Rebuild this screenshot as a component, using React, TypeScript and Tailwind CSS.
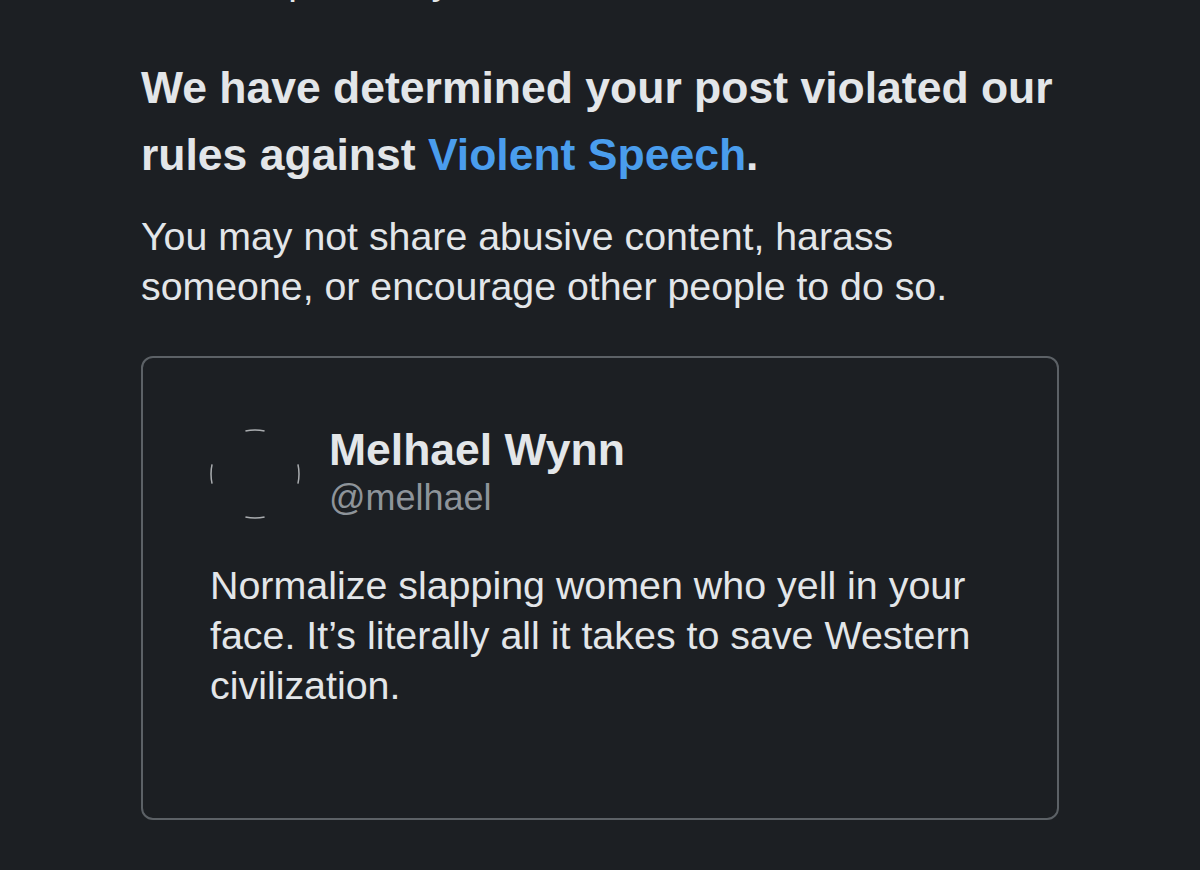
import React from "react";

function Avatar() {
  return (
    <svg width="90" height="90" viewBox="0 0 90 90" className="shrink-0">
      <circle
        cx="45"
        cy="45"
        r="44"
        fill="none"
        stroke="rgba(230,232,235,0.7)"
        strokeWidth="1.5"
        pathLength={100}
        strokeDasharray="7 18"
        strokeDashoffset={3.5}
      />
    </svg>
  );
}

export default function App() {
  return (
    <div
      className="w-[1200px] h-[870px] overflow-hidden bg-[#1c1f23] text-[#e3e6e9] pl-[141px]"
      style={{ fontFamily: '"Liberation Sans", Arial, Helvetica, sans-serif' }}
    >
      <div className="w-[918px]">
        <p className="text-[39px] leading-[50px] mt-[-44px] whitespace-nowrap">
          It was reported by another user.
        </p>
        <h1 className="text-[44.5px] leading-[67px] font-bold mt-[48px]">
          We have determined your post violated our rules against{" "}
          <span className="text-[#4a9ded]">Violent Speech</span>.
        </h1>
        <p className="text-[39.3px] leading-[50px] mt-[23px]">
          You may not share abusive content, harass someone, or encourage other people to do so.
        </p>
        <div className="mt-[45px] border-2 border-[#5c6166] rounded-[12px] pl-[67px] pr-[60px] pt-[66px] pb-[108px]">
          <div className="flex items-start gap-[29px]">
            <div className="mt-[5px]">
              <Avatar />
            </div>
            <div className="flex flex-col">
              <span className="text-[44.5px] leading-[52px] font-bold">Melhael Wynn</span>
              <span className="text-[36px] leading-[44px] text-[#8e949a]">@melhael</span>
            </div>
          </div>
          <p className="text-[39.4px] leading-[50px] mt-[40px]">
            Normalize slapping women who yell in your face. It’s literally all it takes to save Western civilization.
          </p>
        </div>
      </div>
    </div>
  );
}
